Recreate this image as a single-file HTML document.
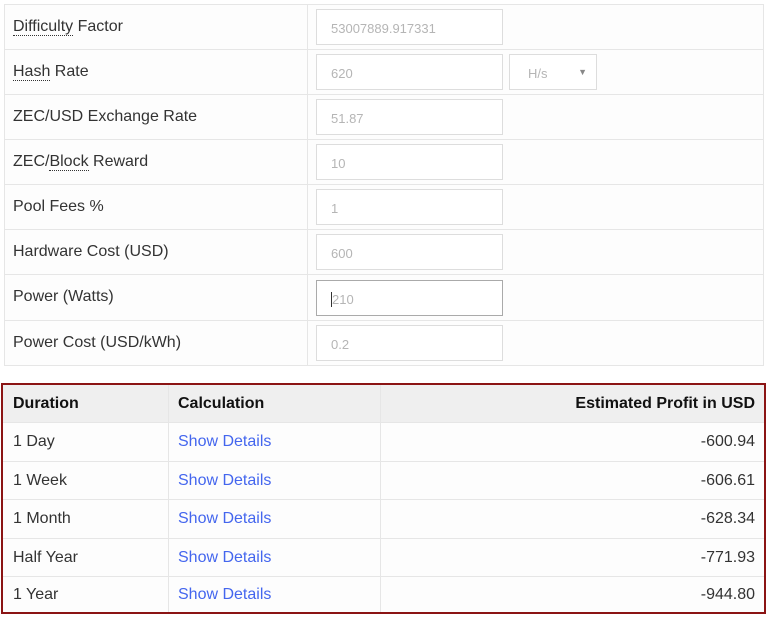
<!DOCTYPE html>
<html><head><meta charset="utf-8"><style>
*{box-sizing:border-box;margin:0;padding:0}
body{width:768px;height:623px;background:#fff;font-family:"Liberation Sans",sans-serif;color:#333;position:relative;overflow:hidden}
.row{position:absolute;left:4px;width:760px;height:46px;border:1px solid #e6e6e6;background:#fdfdfd}
.lab{position:absolute;left:8px;top:13px;font-size:16px;color:#333}
.dot{border-bottom:1px dotted #333}
.vd{position:absolute;left:302px;top:0;bottom:0;width:1px;background:#e6e6e6}
.inp{position:absolute;left:311px;top:4px;width:187px;height:36px;border:1px solid #ddd;background:#fff;font-size:13px;color:#b5b5b5;padding:11px 0 0 14px}
.sel{position:absolute;left:504px;top:4px;width:88px;height:36px;border:1px solid #ddd;background:#fff;font-size:13px;color:#b5b5b5;padding:11px 0 0 18px}
.tb{position:absolute;left:1px;top:383px;width:765px;height:231px;border:2px solid #8b1414;background:#fdfdfd}
.tr{position:absolute;left:0;width:761px;border-bottom:1px solid #e6e6e6;font-size:16px}
.c1,.c2,.c3{position:absolute;top:0;bottom:0;padding-left:10px}
.c1{left:0;width:166px;border-right:1px solid #e6e6e6}
.c2{left:166px;width:212px;border-right:1px solid #e6e6e6;padding-left:9px}
.c3{left:378px;width:383px;text-align:right;padding-right:9px}
.h{background:#efefef;font-weight:bold;color:#111}
.lk{color:#4466ee}
</style></head><body>
<div class="row" style="top:4px"><div class="lab"><span class="dot">Difficulty</span> Factor</div><div class="vd"></div><div class="inp">53007889.917331</div></div>
<div class="row" style="top:49px"><div class="lab"><span class="dot">Hash</span> Rate</div><div class="vd"></div><div class="inp">620</div><div class="sel">H/s<span style="position:absolute;right:9px;top:12px;font-size:9px;color:#888">▼</span></div></div>
<div class="row" style="top:94px"><div class="lab">ZEC/USD Exchange Rate</div><div class="vd"></div><div class="inp">51.87</div></div>
<div class="row" style="top:139px"><div class="lab">ZEC/<span class="dot">Block</span> Reward</div><div class="vd"></div><div class="inp">10</div></div>
<div class="row" style="top:184px"><div class="lab">Pool Fees %</div><div class="vd"></div><div class="inp">1</div></div>
<div class="row" style="top:229px"><div class="lab">Hardware Cost (USD)</div><div class="vd"></div><div class="inp">600</div></div>
<div class="row" style="top:275px;border-top:none;height:46px"><div class="lab">Power (Watts)</div><div class="vd"></div><div class="inp" style="border-color:#aaa;top:5px"><span style="border-left:1px solid #333"></span>210</div></div>
<div class="row" style="top:320px"><div class="lab">Power Cost (USD/kWh)</div><div class="vd"></div><div class="inp">0.2</div></div>

<div class="tb">
<div class="tr h" style="top:0;height:38px;line-height:37px"><div class="c1">Duration</div><div class="c2">Calculation</div><div class="c3">Estimated Profit in USD</div></div>
<div class="tr" style="top:38px;height:39px;line-height:38px"><div class="c1">1 Day</div><div class="c2 lk">Show Details</div><div class="c3">-600.94</div></div>
<div class="tr" style="top:77px;height:38px;line-height:37px"><div class="c1">1 Week</div><div class="c2 lk">Show Details</div><div class="c3">-606.61</div></div>
<div class="tr" style="top:115px;height:39px;line-height:38px"><div class="c1">1 Month</div><div class="c2 lk">Show Details</div><div class="c3">-628.34</div></div>
<div class="tr" style="top:154px;height:38px;line-height:37px"><div class="c1">Half Year</div><div class="c2 lk">Show Details</div><div class="c3">-771.93</div></div>
<div class="tr" style="top:192px;height:35px;line-height:36px;border-bottom:none"><div class="c1">1 Year</div><div class="c2 lk">Show Details</div><div class="c3">-944.80</div></div>
</div>
</body></html>
